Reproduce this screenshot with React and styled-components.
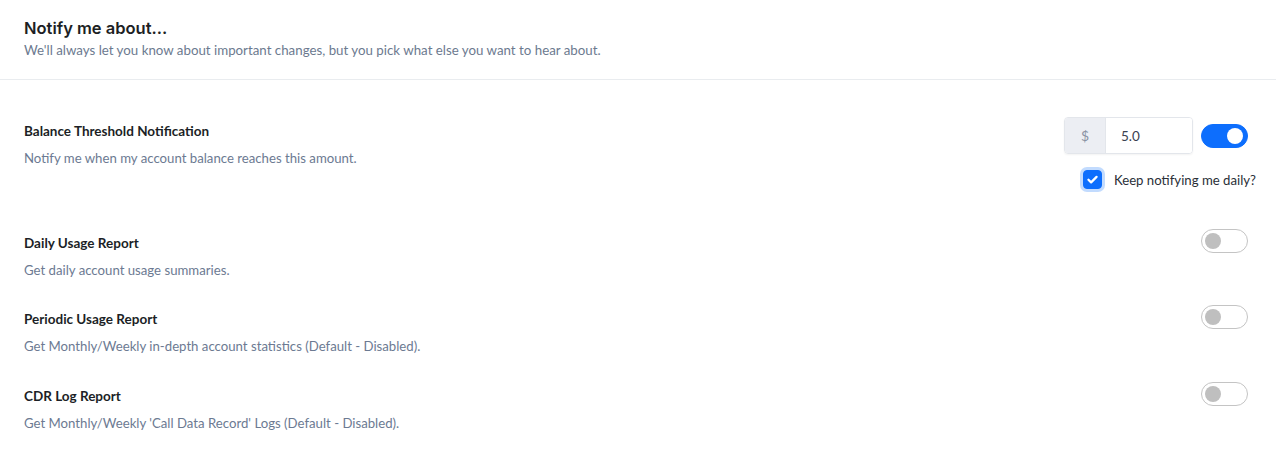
import React, { useState } from "react";
import styled, { createGlobalStyle } from "styled-components";

const GlobalStyle = createGlobalStyle`
  html, body {
    margin: 0;
    padding: 0;
    background: #ffffff;
  }
  body {
    font-family: Lato, "Open Sans", sans-serif;
    -webkit-font-smoothing: antialiased;
  }
`;

const settings = [
  {
    id: "balance",
    title: "Balance Threshold Notification",
    desc: "Notify me when my account balance reaches this amount.",
    on: true,
    threshold: true,
  },
  {
    id: "daily",
    title: "Daily Usage Report",
    desc: "Get daily account usage summaries.",
    on: false,
  },
  {
    id: "periodic",
    title: "Periodic Usage Report",
    desc: "Get Monthly/Weekly in-depth account statistics (Default - Disabled).",
    on: false,
  },
  {
    id: "cdr",
    title: "CDR Log Report",
    desc: "Get Monthly/Weekly 'Call Data Record' Logs (Default - Disabled).",
    on: false,
  },
];

const App = () => {
  const [state, setState] = useState(
    Object.fromEntries(settings.map((s) => [s.id, s.on]))
  );
  const [daily, setDaily] = useState(true);
  const [amount, setAmount] = useState("5.0");

  return (
    <>
      <GlobalStyle />
      <Card>
        <Header>
          <Heading>Notify me about...</Heading>
          <SubHeading>
            We'll always let you know about important changes, but you pick what else you want to hear about.
          </SubHeading>
        </Header>
        <List>
          {settings.map((s) => (
            <Row key={s.id}>
              <Info>
                <Title>{s.title}</Title>
                <Desc>{s.desc}</Desc>
              </Info>
              <Controls $extended={s.threshold}>
                <ControlLine $tall={s.threshold}>
                  {s.threshold && (
                    <InputGroup>
                      <Prefix>$</Prefix>
                      <AmountInput
                        value={amount}
                        onChange={(e) => setAmount(e.target.value)}
                      />
                    </InputGroup>
                  )}
                  <Switch
                    $on={state[s.id]}
                    onClick={() => setState({ ...state, [s.id]: !state[s.id] })}
                  />
                </ControlLine>
                {s.threshold && (
                  <CheckLine onClick={() => setDaily(!daily)}>
                    <CheckBox $checked={daily}>
                      {daily && (
                        <svg width="13" height="13" viewBox="0 0 16 16">
                          <path
                            d="M3 8.3l3.3 3.2L13 4.8"
                            fill="none"
                            stroke="#fff"
                            strokeWidth="2.8"
                            strokeLinecap="round"
                            strokeLinejoin="round"
                          />
                        </svg>
                      )}
                    </CheckBox>
                    <CheckLabel>Keep notifying me daily?</CheckLabel>
                  </CheckLine>
                )}
              </Controls>
            </Row>
          ))}
        </List>
      </Card>
    </>
  );
};

const Card = styled.section`
  width: 100%;
  background: #fff;
`;

const Header = styled.header`
  padding: 17px 24px 0;
  height: 80px;
  box-sizing: border-box;
  border-bottom: 1px solid #e9ecef;
`;

const Heading = styled.h2`
  margin: 0;
  font-family: Inter, Lato, sans-serif;
  font-size: 16.5px;
  font-weight: 600;
  color: #1d1f24;
  line-height: 22px;
`;

const SubHeading = styled.p`
  margin: 2px 0 0;
  font-size: 13.3px;
  color: #6c7a8f;
  line-height: 18px;
`;

const List = styled.div`
  display: flex;
  flex-direction: column;
  padding: 37px 28px 0 24px;
  gap: 25.5px;
`;

const Row = styled.div`
  display: flex;
  justify-content: space-between;
  align-items: flex-start;
`;

const Info = styled.div`
  display: flex;
  flex-direction: column;
  gap: 8px;
  padding-top: 5px;
`;

const Title = styled.div`
  font-size: 13.5px;
  font-weight: 700;
  color: #1c1f26;
  line-height: 19px;
`;

const Desc = styled.div`
  font-size: 13.2px;
  color: #6c7a92;
  line-height: 19px;
`;

const Controls = styled.div`
  display: flex;
  flex-direction: column;
  align-items: flex-end;
  gap: 16px;
  padding-bottom: ${(p) => (p.$extended ? "14px" : "0")};
`;

const ControlLine = styled.div`
  display: flex;
  align-items: center;
  gap: 8px;
  height: ${(p) => (p.$tall ? "37px" : "auto")};
`;

const InputGroup = styled.div`
  display: flex;
  width: 129px;
  height: 37px;
  border: 1px solid #e3e6eb;
  border-radius: 4px;
  box-sizing: border-box;
  overflow: hidden;
  box-shadow: 0 1px 2px rgba(0, 0, 0, 0.05);
`;

const Prefix = styled.span`
  width: 40px;
  display: flex;
  align-items: center;
  justify-content: center;
  background: #eceef3;
  color: #8a93a3;
  font-size: 14px;
  border-right: 1px solid #e3e6eb;
`;

const AmountInput = styled.input`
  flex: 1;
  min-width: 0;
  border: none;
  outline: none;
  padding: 0 0 0 15px;
  font-family: Lato, sans-serif;
  font-size: 13.5px;
  color: #3a4150;
  background: #fff;
`;

const Switch = styled.button`
  position: relative;
  width: 47px;
  height: 24px;
  padding: 0;
  border-radius: 12px;
  cursor: pointer;
  box-sizing: border-box;
  border: 1px solid ${(p) => (p.$on ? "#0d6efd" : "#c4c4c4")};
  background: ${(p) => (p.$on ? "#0d6efd" : "#fff")};

  &::after {
    content: "";
    position: absolute;
    top: 3px;
    left: ${(p) => (p.$on ? "25px" : "3px")};
    width: 16px;
    height: 16px;
    border-radius: 50%;
    background: ${(p) => (p.$on ? "#fff" : "#bfbfbf")};
  }
`;

const CheckLine = styled.label`
  display: flex;
  align-items: center;
  gap: 12px;
  margin-right: -8px;
  cursor: pointer;
`;

const CheckBox = styled.span`
  width: 19px;
  height: 19px;
  border-radius: 4px;
  display: flex;
  align-items: center;
  justify-content: center;
  background: ${(p) => (p.$checked ? "#0d6efd" : "#fff")};
  border: 1px solid #0d6efd;
  box-sizing: border-box;
  box-shadow: 0 0 0 3px rgba(13, 110, 253, 0.25);
`;

const CheckLabel = styled.span`
  font-size: 13.2px;
  color: #2a2f38;
`;

export default App;
